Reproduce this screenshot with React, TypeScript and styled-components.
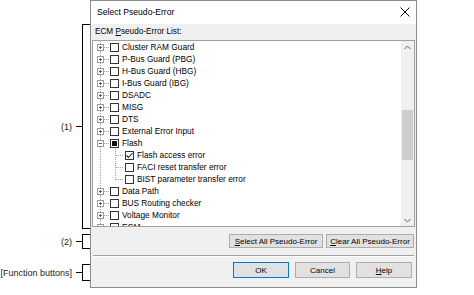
import styled, { createGlobalStyle } from "styled-components"

type CheckState = 'none' | 'checked' | 'mixed'

type TreeNode = {
  label: string
  level: 0 | 1
  expander?: 'plus' | 'minus'
  check: CheckState
  last?: boolean
}

const nodes: TreeNode[] = [
  { label: 'Cluster RAM Guard', level: 0, expander: 'plus', check: 'none' },
  { label: 'P-Bus Guard (PBG)', level: 0, expander: 'plus', check: 'none' },
  { label: 'H-Bus Guard (HBG)', level: 0, expander: 'plus', check: 'none' },
  { label: 'I-Bus Guard (IBG)', level: 0, expander: 'plus', check: 'none' },
  { label: 'DSADC', level: 0, expander: 'plus', check: 'none' },
  { label: 'MISG', level: 0, expander: 'plus', check: 'none' },
  { label: 'DTS', level: 0, expander: 'plus', check: 'none' },
  { label: 'External Error Input', level: 0, expander: 'plus', check: 'none' },
  { label: 'Flash', level: 0, expander: 'minus', check: 'mixed' },
  { label: 'Flash access error', level: 1, check: 'checked' },
  { label: 'FACI reset transfer error', level: 1, check: 'none' },
  { label: 'BIST parameter transfer error', level: 1, check: 'none', last: true },
  { label: 'Data Path', level: 0, expander: 'plus', check: 'none' },
  { label: 'BUS Routing checker', level: 0, expander: 'plus', check: 'none' },
  { label: 'Voltage Monitor', level: 0, expander: 'plus', check: 'none' },
  { label: 'ECM', level: 0, expander: 'plus', check: 'none' },
]

const annotations = [
  { label: '(1)', height: 205, gap: 24 },
  { label: '(2)', height: 15, gap: 5 },
  { label: '[Function buttons]', height: 17, gap: 15 },
]

function RootGutter({ expander }: { expander?: 'plus' | 'minus' }) {
  return (
    <svg width="16" height="12" viewBox="0 0 16 12">
      <line x1="7.5" y1="0" x2="7.5" y2="12" stroke="#a0a0a0" strokeDasharray="1 1" />
      {expander && (
        <>
          <line x1="11" y1="6.5" x2="16" y2="6.5" stroke="#a0a0a0" strokeDasharray="1 1" />
          <rect x="4.5" y="3.5" width="6" height="6" fill="#fff" stroke="#9a9a9a" />
          <line x1="6" y1="6.5" x2="9" y2="6.5" stroke="#4e5f7e" />
          {expander === 'plus' && <line x1="7.5" y1="5" x2="7.5" y2="8" stroke="#4e5f7e" />}
        </>
      )}
    </svg>
  )
}

function ChildGutter({ last }: { last?: boolean }) {
  return (
    <svg width="15" height="12" viewBox="0 0 15 12">
      <line x1="6.5" y1="0" x2="6.5" y2={last ? 7 : 12} stroke="#a0a0a0" strokeDasharray="1 1" />
      <line x1="7" y1="6.5" x2="15" y2="6.5" stroke="#a0a0a0" strokeDasharray="1 1" />
    </svg>
  )
}

function Chevron({ down }: { down?: boolean }) {
  return (
    <svg width="7" height="5" viewBox="0 0 7 5">
      <polyline
        points={down ? '0.5,1 3.5,4 6.5,1' : '0.5,4 3.5,1 6.5,4'}
        fill="none"
        stroke="#606060"
        strokeWidth="1"
      />
    </svg>
  )
}

export default function App() {
  return (
    <>
      <GlobalStyle />
      <Page>
        <Annotations>
          {annotations.map((a) => (
            <Callout key={a.label} $height={a.height} $gap={a.gap}>
              <CalloutLabel>{a.label}</CalloutLabel>
              <Tick />
              <Bracket />
            </Callout>
          ))}
        </Annotations>

        <Dialog>
          <TitleBar>
            <span>Select Pseudo-Error</span>
            <svg width="10" height="10" viewBox="0 0 10 10">
              <path d="M0.5 0.5 L9.5 9.5 M9.5 0.5 L0.5 9.5" stroke="#111" strokeWidth="1" />
            </svg>
          </TitleBar>

          <Body>
            <ListLabel>
              <span>ECM <u>P</u>seudo-Error List:</span>
            </ListLabel>

            <ListBox>
              <Tree>
                {nodes.map((n) => (
                  <Row key={n.label}>
                    <RootGutter expander={n.level === 0 ? n.expander : undefined} />
                    {n.level === 1 && <ChildGutter last={n.last} />}
                    <Check $state={n.check}>
                      {n.check === 'checked' && (
                        <svg width="7" height="7" viewBox="0 0 7 7">
                          <polyline points="0.5,3.5 2.5,5.5 6.5,1" fill="none" stroke="#222" strokeWidth="1.1" />
                        </svg>
                      )}
                    </Check>
                    <RowText>{n.label}</RowText>
                  </Row>
                ))}
              </Tree>
              <ScrollBar>
                <ScrollArrow><Chevron /></ScrollArrow>
                <Track>
                  <Thumb $offset={57} />
                </Track>
                <ScrollArrow><Chevron down /></ScrollArrow>
              </ScrollBar>
            </ListBox>

            <ActionRow>
              <Button $width={94}><span><u>S</u>elect All Pseudo-Error</span></Button>
              <Button $width={88}><span><u>C</u>lear All Pseudo-Error</span></Button>
            </ActionRow>

            <Separator />

            <FooterRow>
              <Button $width={56} $height={16} $default>OK</Button>
              <Button $width={55} $height={16}>Cancel</Button>
              <Button $width={56} $height={16}><span><u>H</u>elp</span></Button>
            </FooterRow>
          </Body>
        </Dialog>
      </Page>
    </>
  )
}

const GlobalStyle = createGlobalStyle`
  html, body {
    margin: 0;
    padding: 0;
    background: #fff;
  }
  * {
    box-sizing: border-box;
  }
`

const Page = styled.div`
  display: flex;
  align-items: flex-start;
  width: 474px;
  height: 295px;
  font-family: "Liberation Sans", Arial, sans-serif;
  color: #000;
`

const Annotations = styled.div`
  display: flex;
  flex-direction: column;
  width: 90px;
`

const Callout = styled.div<{ $height: number; $gap: number }>`
  display: flex;
  align-items: center;
  justify-content: flex-end;
  height: ${({ $height }) => $height}px;
  margin-top: ${({ $gap }) => $gap}px;
`

const CalloutLabel = styled.span`
  font-size: 9px;
  color: #1a1a1a;
  white-space: nowrap;
  margin-right: 4px;
`

const Tick = styled.span`
  width: 6px;
  height: 1px;
  background: #000;
`

const Bracket = styled.span`
  align-self: stretch;
  width: 8px;
  border: 1px solid #000;
  border-right: none;
`

const Dialog = styled.div`
  display: flex;
  flex-direction: column;
  width: 327px;
  height: 288px;
  border: 1px solid #8c8c8c;
  background: #f0f0f0;
`

const TitleBar = styled.div`
  display: flex;
  align-items: center;
  justify-content: space-between;
  height: 23px;
  padding: 0 6px 1px 6px;
  background: #fff;
  font-size: 8.6px;
`

const Body = styled.div`
  display: flex;
  flex-direction: column;
  padding: 0 1px 9px 1px;
`

const ListLabel = styled.div`
  display: flex;
  align-items: center;
  height: 16px;
  padding: 0 0 2px 3px;
  font-size: 8.2px;
`

const ListBox = styled.div`
  display: flex;
  height: 187px;
  border: 1px solid #a0a0a0;
  background: #fff;
  overflow: hidden;
`

const Tree = styled.div`
  flex: 1;
  display: flex;
  flex-direction: column;
  overflow: hidden;
`

const Row = styled.div`
  display: flex;
  align-items: center;
  flex: none;
  height: 12px;

  & > svg {
    flex: none;
  }
`

const Check = styled.span<{ $state: CheckState }>`
  display: flex;
  align-items: center;
  justify-content: center;
  flex: none;
  width: 9px;
  height: 9px;
  margin-left: 1px;
  border: 1px solid #333;
  background: #fff;

  &::after {
    content: '';
    display: ${({ $state }) => ($state === 'mixed' ? 'block' : 'none')};
    width: 5px;
    height: 5px;
    background: #111;
  }
`

const RowText = styled.span`
  margin-left: 3px;
  font-size: 8.3px;
  line-height: 12px;
  white-space: nowrap;
`

const ScrollBar = styled.div`
  display: flex;
  flex-direction: column;
  width: 13px;
  background: #f0f0f0;
`

const ScrollArrow = styled.div`
  display: flex;
  align-items: center;
  justify-content: center;
  height: 12px;
`

const Track = styled.div`
  flex: 1;
  padding: 0 1px;
`

const Thumb = styled.div<{ $offset: number }>`
  margin-top: ${({ $offset }) => $offset}px;
  height: 50px;
  background: #cdcdcd;
`

const ActionRow = styled.div`
  display: flex;
  justify-content: flex-end;
  gap: 3px;
  margin-top: 7px;
  padding-right: 1px;
`

const Separator = styled.div`
  height: 2px;
  margin: 7px 1px 0 1px;
  border-top: 1px solid #a0a0a0;
  border-bottom: 1px solid #fff;
`

const FooterRow = styled.div`
  display: flex;
  justify-content: flex-end;
  gap: 6px;
  margin-top: 5px;
  padding-right: 3px;
`

const Button = styled.div<{ $width: number; $height?: number; $default?: boolean }>`
  display: flex;
  align-items: center;
  justify-content: center;
  width: ${({ $width }) => $width}px;
  height: ${({ $height }) => $height ?? 14}px;
  border: 1px solid ${({ $default }) => ($default ? '#0078d7' : '#adadad')};
  background: #e1e1e1;
  font-size: 8px;
  white-space: nowrap;
`
